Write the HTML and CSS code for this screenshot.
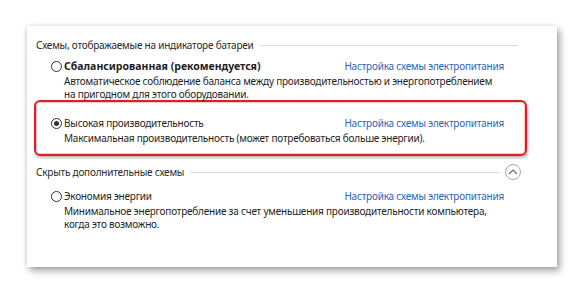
FILE: index.html
```html
<!DOCTYPE html>
<html lang="ru">
<head>
<meta charset="utf-8">
<link rel="stylesheet" href="styles.css">
</head>
<body>
<div class="panel">
  <div class="group-title"><span>Схемы, отображаемые на индикаторе батареи</span><i class="rule"></i></div>

  <div class="scheme first">
    <div class="name-row">
      <span class="radio"></span>
      <span class="name bold">Сбалансированная (рекомендуется)</span>
      <a class="link">Настройка схемы электропитания</a>
    </div>
    <div class="desc">Автоматическое соблюдение баланса между производительностью и энергопотреблением<br>на пригодном для этого оборудовании.</div>
  </div>

  <div class="scheme selected">
    <div class="name-row">
      <span class="radio checked"></span>
      <span class="name">Высокая производительность</span>
      <a class="link">Настройка схемы электропитания</a>
    </div>
    <div class="desc">Максимальная производительность (может потребоваться больше энергии).</div>
  </div>

  <div class="group-title hide"><span>Скрыть дополнительные схемы</span><i class="rule"></i>
    <span class="collapse"><svg width="10" height="6" viewBox="0 0 10 6"><path d="M1 5 L5 1 L9 5" fill="none" stroke="#6a6a6a" stroke-width="1.2"/></svg></span>
  </div>

  <div class="scheme third">
    <div class="name-row">
      <span class="radio"></span>
      <span class="name">Экономия энергии</span>
      <a class="link">Настройка схемы электропитания</a>
    </div>
    <div class="desc">Минимальное энергопотребление за счет уменьшения производительности компьютера,<br>когда это возможно.</div>
  </div>
</div>
</body>
</html>
```

FILE: styles.css
```css
html, body {
  margin: 0;
  padding: 0;
  background: #ffffff;
}
body {
  width: 584px;
  height: 296px;
  overflow: hidden;
  font-family: "Noto Sans", "Open Sans", sans-serif;
  font-size: 10px;
  letter-spacing: -0.22px;
  color: #1e1e1e;
}
.panel {
  margin: 26px 0 0 27px;
  width: 530px;
  height: 241px;
  box-sizing: border-box;
  background: #ffffff;
  padding: 12px 36px 0 9px;
  box-shadow: 3px 4px 7px rgba(0, 0, 0, 0.35), -1px 0 4px rgba(0, 0, 0, 0.12);
}
.group-title {
  display: flex;
  align-items: center;
  height: 14px;
  line-height: 14px;
  color: #2a2a2a;
  white-space: nowrap;
}
.rule {
  flex: 1;
  height: 1px;
  background: #dcdcdc;
  margin-left: 6px;
  margin-right: 3px;
}
.group-title.hide {
  margin-top: 9px;
}
.group-title.hide .rule {
  margin-right: 6px;
}
.collapse {
  width: 16px;
  height: 16px;
  border: 1px solid #a8a8a8;
  border-radius: 50%;
  display: flex;
  align-items: center;
  justify-content: center;
  box-sizing: border-box;
  flex: none;
}
.collapse svg {
  display: block;
  margin-top: -1px;
}
.scheme {
  margin-left: -2px;
  width: 493px;
  box-sizing: border-box;
  padding: 0 21px 0 14px;
  border: 2px solid transparent;
  border-radius: 6px;
  white-space: nowrap;
}
.scheme.first {
  margin-top: 4px;
}
.scheme.selected {
  border-color: #dc1f26;
  padding-top: 13px;
  padding-bottom: 9px;
  margin-top: -3px;
  box-shadow: 1px 2px 3px rgba(0, 0, 0, 0.28), inset 0 0 0 1px #f6c9cb;
}
.scheme.third {
  margin-top: 7px;
}
.name-row {
  display: flex;
  align-items: center;
  height: 16px;
}
.radio {
  width: 11px;
  height: 11px;
  box-sizing: border-box;
  border: 1px solid #333333;
  border-radius: 50%;
  margin-left: 1px;
  margin-right: 2px;
  position: relative;
  flex: none;
}
.radio.checked::after {
  content: "";
  position: absolute;
  left: 2px;
  top: 2px;
  width: 5px;
  height: 5px;
  border-radius: 50%;
  background: #333333;
}
.name {
  flex: 1;
  color: #1e1e1e;
}
.bold {
  font-weight: bold;
  font-size: 10.5px;
  letter-spacing: 0;
}
.link {
  color: #2f64b4;
  text-decoration: none;
}
.desc {
  margin-top: 1px;
  padding-left: 14px;
  line-height: 13px;
  color: #1e1e1e;
}
```
